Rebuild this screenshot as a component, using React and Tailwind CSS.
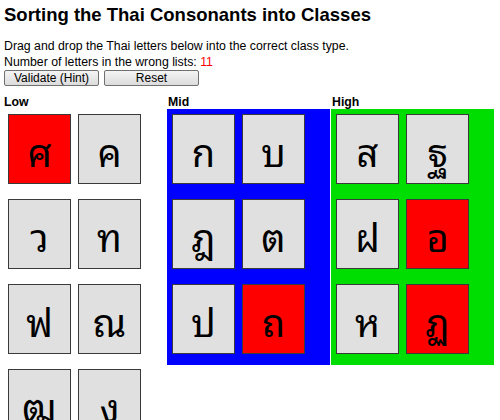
import React from "react";

const columns = [
  {
    name: "Low",
    bg: "bg-white",
    letters: [
      { ch: "ศ", wrong: true },
      { ch: "ค" },
      { ch: "ว" },
      { ch: "ท" },
      { ch: "ฟ" },
      { ch: "ณ" },
      { ch: "ฒ" },
      { ch: "ง" },
    ],
  },
  {
    name: "Mid",
    bg: "bg-[#0000ff]",
    letters: [
      { ch: "ก" },
      { ch: "บ" },
      { ch: "ฎ" },
      { ch: "ต" },
      { ch: "ป" },
      { ch: "ถ", wrong: true },
    ],
  },
  {
    name: "High",
    bg: "bg-[#00dd00]",
    letters: [
      { ch: "ส" },
      { ch: "ฐ" },
      { ch: "ฝ" },
      { ch: "อ", wrong: true },
      { ch: "ห" },
      { ch: "ฏ", wrong: true },
    ],
  },
];

function Tile({ ch, wrong }) {
  return (
    <div
      className={`w-[63px] h-[70px] flex items-center justify-center border border-[#3a3a3a] text-[38px] text-black font-['Tahoma','Noto_Sans_Thai_Looped','Loma','Garuda','Norasi','Noto_Sans_Thai','DejaVu_Sans',sans-serif] ${
        wrong ? "bg-[#ff0000]" : "bg-[#e0e0e0]"
      }`}
    >
      {ch}
    </div>
  );
}

function Column({ name, bg, letters }) {
  return (
    <div className="w-[163px] flex flex-col">
      <div className="pl-[1px] h-[13px] leading-[13px] text-[12.3px] font-bold">{name}</div>
      <div className={`${bg} grid grid-cols-[63px_63px] gap-x-[7px] gap-y-[15px] content-start pl-[5px] pt-[5px] pb-[11px]`}>
        {letters.map((l) => (
          <Tile key={l.ch} {...l} />
        ))}
      </div>
    </div>
  );
}

export default function App() {
  return (
    <div className="w-[500px] h-[420px] overflow-hidden bg-white text-black font-['Liberation_Sans',Arial,sans-serif]">
      <h1 className="pl-[4px] pt-[4px] text-[18.5px] leading-[21px] font-bold">
        Sorting the Thai Consonants into Classes
      </h1>
      <div className="pl-[4px] mt-[13px] text-[12.3px] leading-[16px]">
        <p>Drag and drop the Thai letters below into the correct class type.</p>
        <p>
          Number of letters in the wrong lists: <span className="text-[#ff0000]">11</span>
        </p>
      </div>
      <div className="pl-[4px] flex gap-[5px]">
        <button className="w-[95px] h-[16px] leading-[14px] text-[12px] border border-[#707070] rounded-[2px] bg-linear-to-b from-[#f4f4f4] to-[#dcdcdc]">
          Validate (Hint)
        </button>
        <button className="w-[95px] h-[16px] leading-[14px] text-[12px] border border-[#707070] rounded-[2px] bg-linear-to-b from-[#f4f4f4] to-[#dcdcdc]">
          Reset
        </button>
      </div>
      <div className="mt-[10px] flex items-start pl-[3px] gap-x-[1px]">
        {columns.map((c) => (
          <Column key={c.name} {...c} />
        ))}
      </div>
    </div>
  );
}
